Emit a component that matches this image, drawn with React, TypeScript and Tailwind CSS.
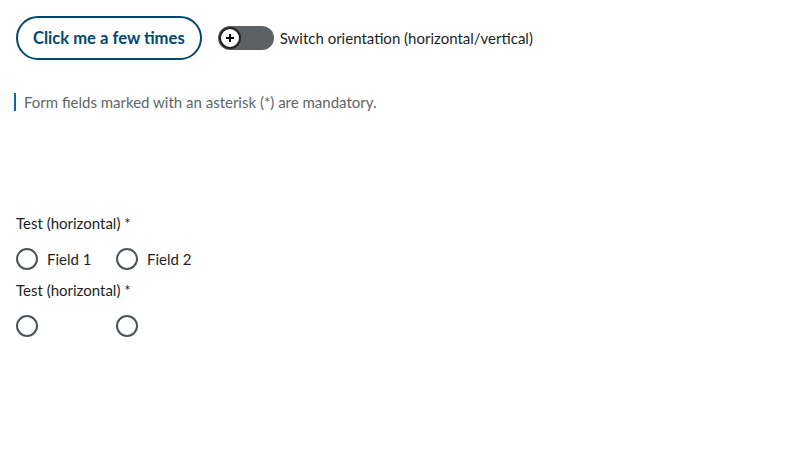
import { useState } from "react";

function Radio({ label, name }: { label?: string; name: string }) {
  return (
    <label className="flex w-[100px] items-center gap-[9px]">
      <span className="h-[22px] w-[22px] rounded-full border-2 border-[#4a5559] bg-white" />
      {label && <span className="text-[15px] text-[#1b1f22]">{label}</span>}
      <input type="radio" name={name} className="hidden" />
    </label>
  );
}

export default function App() {
  const [on, setOn] = useState(false);

  return (
    <div className="min-h-[464px] bg-white px-4 pt-4 font-['Lato',sans-serif] text-[#1b1f22]">
      <div className="flex items-center gap-4">
        <button className="h-11 rounded-full border-2 border-[#00486f] px-[15px] text-[16.6px] font-bold text-[#00486f]">
          Click me a few times
        </button>
        <div className="flex items-center gap-[6px]">
          <button
            onClick={() => setOn(!on)}
            className="flex h-6 w-14 items-center rounded-full bg-[#5b6164] p-[1px]"
          >
            <span className="flex h-[22px] w-[22px] items-center justify-center rounded-full border-2 border-[#222] bg-white">
              <svg width="10" height="10" viewBox="0 0 10 10">
                <path d="M5 1v8M1 5h8" stroke="#000" strokeWidth="2" />
              </svg>
            </span>
          </button>
          <span className="text-[15px]">Switch orientation (horizontal/vertical)</span>
        </div>
      </div>

      <p className="mt-[33px] -ml-[2px] border-l-2 border-[#0a6aa8] pl-2 text-[15px] leading-[18px] text-[#5c666c]">
        Form fields marked with an asterisk (*) are mandatory.
      </p>

      <div className="mt-[102px] flex flex-col">
        <div className="text-[15px] leading-5">Test (horizontal) *</div>
        <div className="mt-[15px] flex">
          <Radio name="a" label="Field 1" />
          <Radio name="a" label="Field 2" />
        </div>
        <div className="mt-[9px] text-[15px] leading-5">Test (horizontal) *</div>
        <div className="mt-[15px] flex">
          <Radio name="b" />
          <Radio name="b" />
        </div>
      </div>
    </div>
  );
}
